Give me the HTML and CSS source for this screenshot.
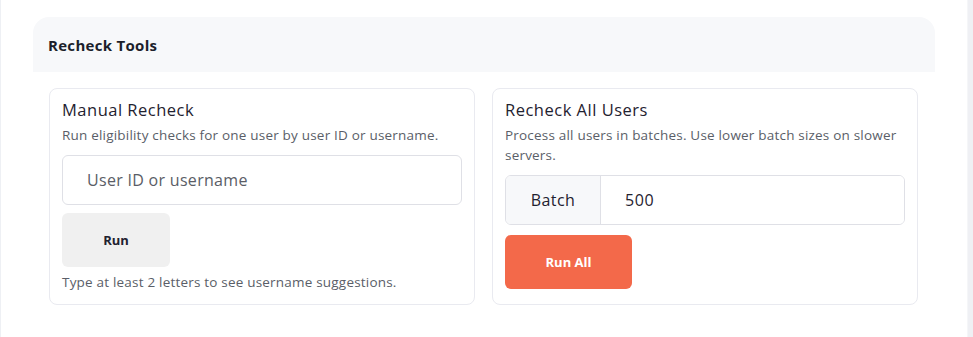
FILE: index.html
```html
<!DOCTYPE html>
<html lang="en">
<head>
    <meta charset="UTF-8">
    <meta name="viewport" content="width=device-width, initial-scale=1.0">
    <title>Recheck Tools</title>
    <link rel="stylesheet" href="styles.css">
</head>
<body>
    <div class="page">
        <div class="content">
            <div class="panel">
                <div class="panel-header">
                    <h2>Recheck Tools</h2>
                </div>
                <div class="panel-body">
                    <div class="tool-card">
                        <h3>Manual Recheck</h3>
                        <p class="muted">Run eligibility checks for one user by user ID or username.</p>
                        <input type="text" class="field" placeholder="User ID or username">
                        <button class="btn btn-light">Run</button>
                        <p class="muted hint">Type at least 2 letters to see username suggestions.</p>
                    </div>
                    <div class="tool-card">
                        <h3>Recheck All Users</h3>
                        <p class="muted">Process all users in batches. Use lower batch sizes on slower servers.</p>
                        <div class="input-group">
                            <span class="addon">Batch</span>
                            <input type="text" class="group-field" value="500">
                        </div>
                        <button class="btn btn-primary">Run All</button>
                    </div>
                </div>
            </div>
        </div>
        <div class="rail"></div>
    </div>
</body>
</html>
```

FILE: styles.css
```css
* {
  box-sizing: border-box;
}

body {
  margin: 0;
  background-color: #fff;
  font-family: "Open Sans", sans-serif;
  color: #1f2230;
}

.page {
  display: flex;
  min-height: 337px;
}

.content {
  flex: 1;
  border-left: 1px solid #eef0f4;
  padding: 17px 32px 0 32px;
}

.rail {
  width: 6px;
  background-color: #eff0f4;
  border-left: 1px solid #f5f6f8;
}

/* Panel */
.panel {
  width: 902px;
  background-color: #fff;
  border-radius: 16px 16px 0 0;
}

.panel-header {
  height: 55px;
  display: flex;
  align-items: center;
  padding: 0 15px;
  background-color: #f7f8fa;
  border-radius: 16px 16px 0 0;
}

.panel-header h2 {
  margin: 0;
  font-size: 15px;
  font-weight: 700;
  letter-spacing: 0.3px;
  color: #1c1f2b;
}

.panel-body {
  display: grid;
  grid-template-columns: 1fr 1fr;
  gap: 17px;
  padding: 16px 17px 0 16px;
}

/* Tool cards */
.tool-card {
  border: 1px solid #e9eaf0;
  border-radius: 8px;
  padding: 9px 12px 12px 12px;
}

.tool-card h3 {
  margin: 0 0 3px 0;
  font-size: 16.5px;
  line-height: 24px;
  font-weight: 500;
  letter-spacing: 0.5px;
  color: #1f2230;
}

.muted {
  margin: 0;
  font-size: 13.5px;
  line-height: 20px;
  letter-spacing: 0.2px;
  color: #5a5e68;
}

.hint {
  margin-top: 5px;
}

.field {
  display: block;
  width: 100%;
  height: 50px;
  margin-top: 10px;
  padding: 0 24px;
  border: 1px solid #dfe0e6;
  border-radius: 6px;
  font-family: inherit;
  font-size: 16px;
  letter-spacing: 0.3px;
  color: #1f2230;
  outline: none;
}

.field::placeholder {
  color: #5a5d66;
}

/* Input group */
.input-group {
  display: flex;
  height: 50px;
  margin-top: 10px;
  border: 1px solid #dfe0e6;
  border-radius: 6px;
  overflow: hidden;
}

.addon {
  width: 95px;
  display: flex;
  align-items: center;
  justify-content: center;
  background-color: #f7f8fa;
  border-right: 1px solid #dfe0e6;
  font-size: 16px;
  letter-spacing: 0.4px;
  color: #1f2230;
}

.group-field {
  flex: 1;
  border: none;
  padding: 0 24px;
  font-family: inherit;
  font-size: 16px;
  letter-spacing: 0.6px;
  color: #1f2230;
  outline: none;
}

/* Buttons */
.btn {
  display: block;
  height: 54px;
  margin-top: 8px;
  border: none;
  border-radius: 6px;
  font-family: inherit;
  font-size: 13px;
  font-weight: 700;
  cursor: pointer;
}

.btn-light {
  width: 108px;
  background-color: #f0f0f0;
  color: #1f2230;
}

.btn-primary {
  width: 127px;
  margin-top: 10px;
  background-color: #f3694a;
  color: #fff;
}

.btn-primary:hover {
  background-color: #e45a3c;
}
```
